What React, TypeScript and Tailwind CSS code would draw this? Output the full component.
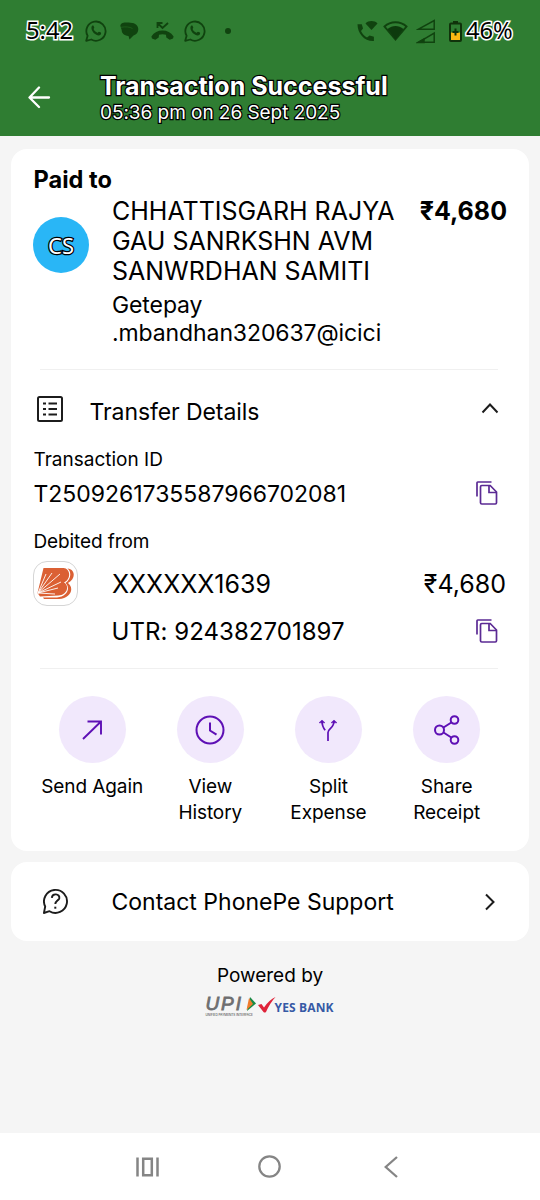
import type { ReactNode } from "react";

const OUTLINE_DARK = "[-webkit-text-stroke:2.5px_#000] [paint-order:stroke_fill]";
const OUTLINE_LIGHT = "[-webkit-text-stroke:3px_#fff] [paint-order:stroke_fill]";

function WhatsAppIcon() {
  return (
    <svg width="22" height="22" viewBox="0 0 22 22" fill="none" stroke="#10430f" strokeWidth="1.8">
      <path d="M1.2 20.8l1.4-5A9.6 9.6 0 1 1 6.3 19.500z" strokeLinejoin="round" />
      <path
        d="M7.4 5.600c.5-.3 1-.2 1.200.3l.7 1.700c.1.4-.7 1.200-.7 1.500.5 1.600 2.100 3.100 3.800 3.700.5 0 1.100-1.200 1.600-1.100l1.900.9c.5.4.1 1.700-.4 2.200-1.700 1.500-4.500.2-6.500-1.500C7.200 11.700 5.200 7.400 7.400 5.600z"
        fill="#10430f"
        stroke="none"
      />
    </svg>
  );
}

function StatusBar() {
  return (
    <div className="flex h-[62px] items-center">
      <span className={`ml-[26px] w-[47px] font-['Noto_Sans',sans-serif] text-[23.700px] leading-none text-black ${OUTLINE_LIGHT}`}>5:42</span>
      <div className="ml-[12px] flex items-center">
        <WhatsAppIcon />
        <svg className="ml-[13px]" width="19" height="18" viewBox="0 0 19 18" fill="#10430f">
          <path d="M2.500 1C5 .3 8 .5 10.500.7 15.500 1 18.300 3.500 18.300 7.200c0 3-1.800 5.300-4.800 6.300L9.500 17.500l-1-3.500C4 13.500 1.500 11 1.700 8L.3 3.800Q.5 1.500 2.500 1z" />
          <path d="M1 5.300c4-.8 9-.5 11.500 1.200" fill="none" stroke="#22661f" strokeWidth=".7" />
        </svg>
        <svg className="ml-[12px]" width="23" height="18" viewBox="0 0 23 18" fill="#10430f">
          <path d="M1 16.500l-.6-2C3 10.500 7 8.600 11.500 8.600s8.500 1.900 11.100 5.900l-.6 2-3.300 1.200-3.400-2.200-.3-2.800a12 12 0 0 0-7 0l-.3 2.800-3.400 2.200z" />
          <path d="M6.500 6V1h5M7 1.500l4.500 4.500L17 1" fill="none" stroke="#10430f" strokeWidth="1.800" />
        </svg>
        <span className="ml-[10px] flex">
          <WhatsAppIcon />
        </span>
        <span className="ml-[19px] size-[6px] rounded-full bg-[#10430f]" />
      </div>
      <div className="ml-auto flex items-center">
        <svg width="21" height="21" viewBox="0 0 21 21" fill="#10430f">
          <path d="M.5 3.200h4.300l1.200 4.300-2 2.500c1.400 3 3.200 4.900 6 6.500l2.600-2 4.300 1.200V20C7.500 20.500.5 12.500.5 3.200z" />
          <path d="M8.500 2.500c3-3.200 9-3.200 12 0l-6 6.500z" />
        </svg>
        <svg className="ml-[5px]" width="25" height="20" viewBox="0 0 25 20">
          <path d="M1.500 5.500C7.500-.2 17.500-.2 23.500 5.500L12.500 18.500z" fill="none" stroke="#10430f" strokeWidth="1.900" />
          <path d="M4.500 8c5-4 11-4 16 0l-8 10.500z" fill="#0d3a0d" />
        </svg>
        <svg className="ml-[8px]" width="20" height="25" viewBox="0 0 20 25" fill="none" stroke="#10430f" strokeWidth="1.500">
          <path d="M2.500 10.200L18.200 1.500v8.700zM2.500 23.300L18.200 14v9.300z" />
          <path d="M2 23.500l6-3.500v3.500z" fill="#10430f" />
        </svg>
        <svg className="ml-[13px]" width="14" height="21" viewBox="0 0 14 21">
          <path d="M4 0h5v2H4z" fill="#10330b" />
          <rect x="1" y="2.500" width="11" height="17.500" rx="1" fill="#2f7d32" stroke="#10330b" strokeWidth="2" />
          <path d="M2 11.500h9V19H2z" fill="#fdb813" />
          <path d="M6.500 7.500v7M3.500 11h6" stroke="#10330b" strokeWidth="2" />
        </svg>
      </div>
      <span className={`mr-[27px] ml-[3px] w-[47px] font-['Noto_Sans',sans-serif] text-[23.700px] leading-none whitespace-nowrap text-black ${OUTLINE_LIGHT}`}>46%</span>
    </div>
  );
}

function CopyIcon() {
  return (
    <svg width="22" height="25" viewBox="0 0 22 25" fill="none" stroke="#5b2a94" strokeWidth="1.700">
      <path d="M1 15.500V1.800Q1 1 1.800 1H15.500" />
      <path d="M5.800 4.500h8.400l6.300 6.500v10.800q0 1.200-1.200 1.200H5.800q-1.300 0-1.300-1.300V5.700q0-1.200 1.300-1.200z" />
      <path d="M13 4.800v6.700h7.300" />
    </svg>
  );
}

function BankLogo() {
  return (
    <div className="flex size-[45px] items-center justify-center rounded-[14px] border border-[#d5d5d5] bg-white">
      <svg width="38" height="33" viewBox="0 0 38 33">
        <path d="M6.500 1h20c7 .5 8 11 .5 14.500 6 3.500 3 12.500-5.500 13L3 29.500 .5 26z" fill="#db6034" />
        <path d="M30.500 1.500c8 .5 8.500 10.500.5 14.500 7 5.500 2 15.500-9 16H7l-1-1.500h14c10-.5 14-9.500 8.500-14.500C34.500 11.500 34.500 4.500 30.500 1.500z" fill="#db6034" />
        <path d="M1 26L9 7M1 26L15 6M1 26L23 7M1 26l23-11M1 26l20-5M1 26l17 1" stroke="#fff" strokeWidth=".9" />
      </svg>
    </div>
  );
}

function Action({ lines, children }: { lines: string[]; children: ReactNode }) {
  return (
    <div className="flex w-[118.200px] flex-col items-center">
      <div className="flex size-[67px] items-center justify-center rounded-full bg-[#f1e8fc]">{children}</div>
      <div className="mt-[11px] text-center text-[19px] leading-[26px] tracking-[-0.080px]">
        {lines.map((line) => (
          <div key={line}>{line}</div>
        ))}
      </div>
    </div>
  );
}

function Actions() {
  return (
    <div className="mt-[27px] flex pl-[22px]">
      <Action lines={["Send Again"]}>
        <svg width="30" height="30" viewBox="0 0 30 30" fill="none" stroke="#5e10b5" strokeWidth="1.900">
          <path d="M6 24L24 6.500M10.500 6.500h13.500V19.500" />
        </svg>
      </Action>
      <Action lines={["View", "History"]}>
        <svg width="30" height="30" viewBox="0 0 30 30" fill="none" stroke="#5e10b5" strokeWidth="2">
          <circle cx="15" cy="15" r="13.500" />
          <path d="M15 7.500v8l6.500 4.200" />
        </svg>
      </Action>
      <Action lines={["Split", "Expense"]}>
        <svg width="20" height="24" viewBox="0 0 20 24" fill="none" stroke="#5e10b5" strokeWidth="1.700">
          <path d="M4 3c0 4 .5 6 3.200 9.200M10 23v-8.500c0-4 6-4 6-11.500" />
          <path d="M1 4.800L4 2l3 2.800zM13 4.800L16 2l3 2.800z" fill="#5e10b5" strokeWidth=".5" />
        </svg>
      </Action>
      <Action lines={["Share", "Receipt"]}>
        <svg width="28" height="30" viewBox="0 0 28 30" fill="none" stroke="#5e10b5" strokeWidth="2">
          <circle cx="6.500" cy="15" r="4.500" />
          <circle cx="21.500" cy="5" r="3.800" />
          <circle cx="21.500" cy="25" r="3.800" />
          <path d="M10.500 12.500l7.800-5M10.500 17.500l7.800 5" />
        </svg>
      </Action>
    </div>
  );
}

export default function App() {
  return (
    <div className="flex h-[1200px] w-[540px] flex-col bg-[#f5f5f5] font-['Inter',sans-serif] text-black">
      <header className="h-[136px] bg-[#2f7d32]">
        <StatusBar />
        <div className="flex">
          <svg className="mt-[23px] ml-[28px]" width="23" height="24" viewBox="0 0 23 24" fill="none" stroke="#fff" strokeWidth="2.300" strokeLinecap="round" strokeLinejoin="round">
            <path d="M21 12.500H2M11 2.500l-9.500 10L11 22" />
          </svg>
          <div className={`ml-[49px] pt-[10px] text-white ${OUTLINE_DARK}`}>
            <h1 className="text-[25px] leading-[28px] font-bold">Transaction Successful</h1>
            <p className="text-[19px] leading-[25px] tracking-[-0.050px]">05:36 pm on 26 Sept 2025</p>
          </div>
        </div>
      </header>

      <main className="px-[11px]">
        <section className="mt-[13px] h-[702px] rounded-[16px] bg-white">
          <h2 className="ml-[22.500px] pt-[16px] text-[23.600px] leading-[30px] font-bold">Paid to</h2>
          <div className="flex h-[174px] pr-[22px] pl-[22px]">
            <div className="mt-[22px] flex size-[56px] items-center justify-center rounded-full bg-[#29b6f6]">
              <span className={`font-['Noto_Sans',sans-serif] text-[22px] leading-none text-white ${OUTLINE_DARK}`}>CS</span>
            </div>
            <div className="ml-[23px] pt-px whitespace-nowrap">
              <p className="w-[290px] text-[25px] leading-[30px]">
                CHHATTISGARH RAJYA
                <br />
                GAU SANRKSHN AVM
                <br />
                SANWRDHAN SAMITI
              </p>
              <p className="mt-[5px] text-[23px] leading-[28px] tracking-[-0.100px]">
                Getepay
                <br />
                .mbandhan320637@icici
              </p>
            </div>
            <span className="ml-auto pt-px text-[25px] leading-[30px] font-bold">₹4,680</span>
          </div>
          <hr className="mr-[31px] ml-[29px] border-[#f0f0f0]" />

          <div className="flex h-[76px] items-center pr-[30px] pl-[26px]">
            <svg className="mt-px" width="26" height="26" viewBox="0 0 26 26" fill="none" stroke="#1c1c1c" strokeWidth="2">
              <rect x="1" y="1" width="24" height="24" rx="1.500" />
              <path d="M11.500 7.500h8.500M11.500 13h8.500M11.500 18.500h8.500" />
              <path d="M6 7.500h3M6 13h3M6 18.500h3" />
            </svg>
            <span className="mt-[8px] ml-[26.500px] text-[23px] leading-[30px] tracking-[-0.080px]">Transfer Details</span>
            <svg className="ml-auto" width="18" height="12" viewBox="0 0 18 12" fill="none" stroke="#1c1c1c" strokeWidth="2">
              <path d="M1.500 10.500L9 2.500l7.500 8" />
            </svg>
          </div>

          <div className="-mt-px ml-[22.500px] text-[19px] leading-[30px]">Transaction ID</div>
          <div className="flex h-[38px] items-center pr-[31px] pl-[22.500px]">
            <span className="text-[23px] leading-[30px] tracking-[-0.030px]">T2509261735587966702081</span>
            <span className="-mt-px ml-auto">
              <CopyIcon />
            </span>
          </div>
          <div className="mt-[14px] ml-[22.500px] text-[19px] leading-[30px] tracking-[-0.100px]">Debited from</div>
          <div className="mt-[4px] flex h-[45px] items-center pr-[23px] pl-[22px]">
            <BankLogo />
            <span className="ml-[34px] text-[25px] leading-[30px]">XXXXXX1639</span>
            <span className="ml-auto text-[25px] leading-[30px]">₹4,680</span>
          </div>
          <div className="mt-[7px] flex h-[38px] items-center pr-[31px] pl-[100.500px]">
            <span className="text-[24px] leading-[30px] tracking-[0.050px]">UTR: 924382701897</span>
            <span className="-mt-px ml-auto">
              <CopyIcon />
            </span>
          </div>
          <hr className="mt-[17px] mr-[31px] ml-[29px] border-[#f0f0f0]" />
          <Actions />
        </section>

        <section className="mt-[11px] flex h-[79px] items-center rounded-[16px] bg-white pr-[33px] pl-[32px]">
          <svg width="26" height="27" viewBox="0 0 26 27" fill="none" stroke="#1c1c1c" strokeWidth="1.900">
            <path d="M2.200 18.500A11.500 11.500 0 1 1 6.500 23.200L.9 25z" strokeLinejoin="round" />
            <path d="M8.800 9.800c.5-5 8.300-4.200 7.500.4-.5 2.300-4 2.800-4 5.800" />
            <path d="M12.300 18.700v2" strokeWidth="2" />
          </svg>
          <span className="ml-[42.500px] text-[23px] leading-[30px]">Contact PhonePe Support</span>
          <svg className="ml-auto" width="12" height="18" viewBox="0 0 12 18" fill="none" stroke="#1c1c1c" strokeWidth="2">
            <path d="M2 1.500L9.500 9 2 16.500" />
          </svg>
        </section>
      </main>

      <footer className="flex flex-col items-center">
        <p className="mt-[21px] text-[19px] leading-[28px]">Powered by</p>
        <div className="mt-[5px] flex h-[24px] w-[129px]">
          <div className="flex w-[52px] flex-col">
            <div className="flex h-[18px] items-center">
              <span className="w-[40px] font-['Liberation_Sans',sans-serif] text-[19px] leading-[18px] tracking-[1.900px] text-[#6e6e70] italic [-webkit-text-stroke:0.800px_#6e6e70]">UPI</span>
              <svg width="10" height="14" viewBox="0 0 10 14">
                <path d="M4 0l6 6.500L1 14z" fill="#188a45" />
                <path d="M3 1l4 6-6.500 6z" fill="#f07b2d" />
              </svg>
            </div>
            <span className="text-[3.100px] leading-[4px] whitespace-nowrap text-[#333]">UNIFIED PAYMENTS INTERFACE</span>
          </div>
          <svg className="mt-[2px]" width="18" height="16" viewBox="0 0 18 16">
            <path d="M0 8l3.500-1 2.500 3.500Q11 3 17.500 0 12 6 8 15q-1.500 1-2.500 0z" fill="#df2339" />
          </svg>
          <span className="mt-[6px] -ml-px font-['Open_Sans',sans-serif] text-[12px] leading-[13px] font-bold tracking-[0.150px] whitespace-nowrap text-[#3659a5]">YES BANK</span>
        </div>
      </footer>

      <nav className="mt-auto flex h-[67px] items-center bg-white pl-[136px]">
        <svg width="23" height="20" viewBox="0 0 23 20" fill="none" stroke="#858585" strokeWidth="2.500">
          <path d="M1.500 .5v19M21.500 .5v19" />
          <path d="M7.200 1.800h8.600v16.400H7.200z" />
        </svg>
        <svg className="ml-[99px]" width="23" height="23" viewBox="0 0 23 23" fill="none" stroke="#858585" strokeWidth="2.300">
          <circle cx="11.500" cy="11.500" r="10.200" />
        </svg>
        <svg className="ml-[103px]" width="14" height="22" viewBox="0 0 14 22" fill="none" stroke="#858585" strokeWidth="2.300">
          <path d="M13 1L1.700 11 13 21" />
        </svg>
      </nav>
    </div>
  );
}
